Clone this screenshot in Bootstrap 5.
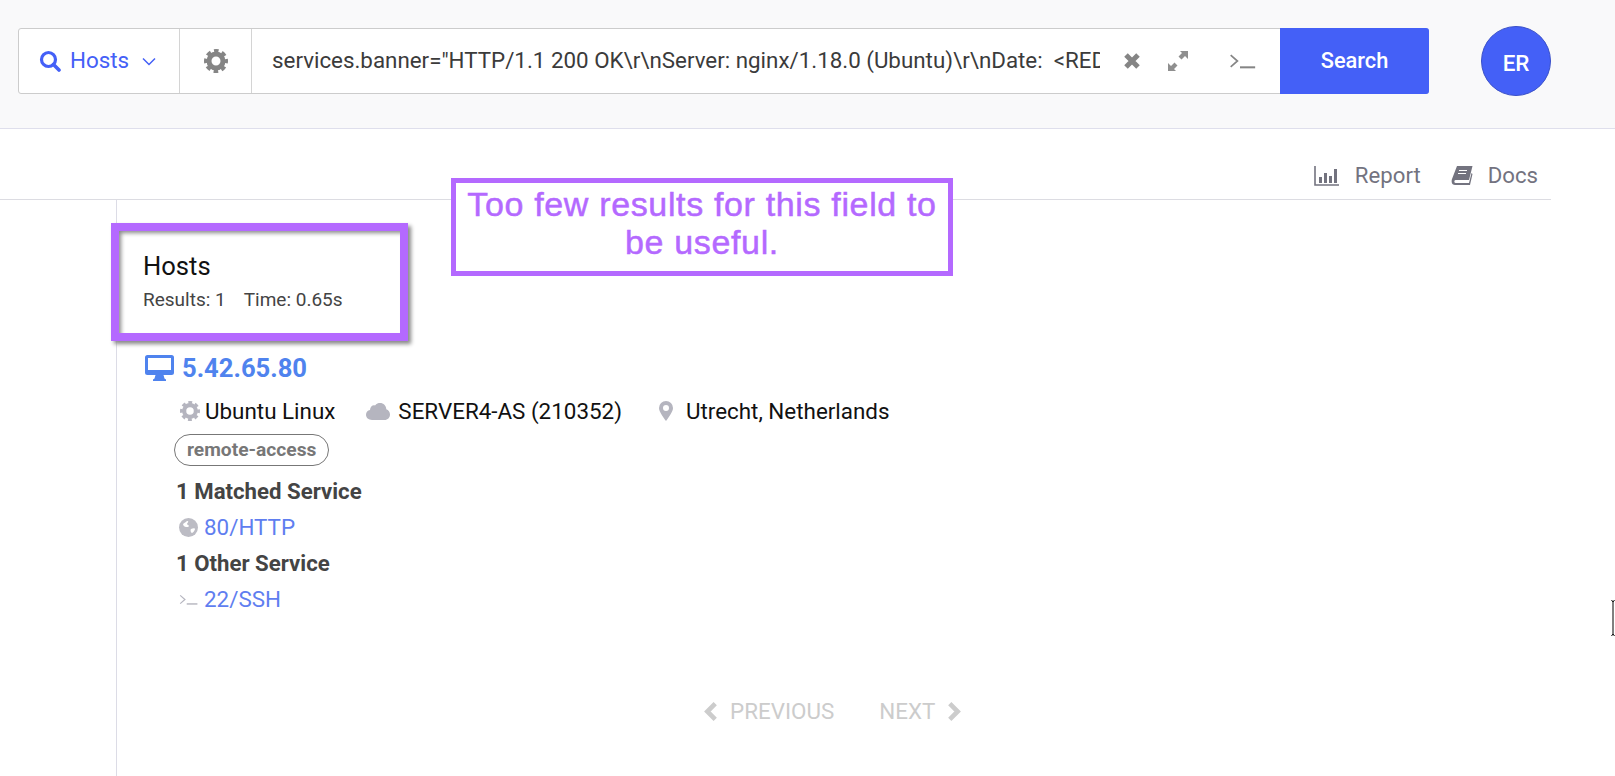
<!DOCTYPE html>
<html lang="en">
<head>
    <meta charset="UTF-8">
    <meta name="viewport" content="width=device-width, initial-scale=1.0">
    <title>Hosts search</title>
    <link href="https://cdn.jsdelivr.net/npm/bootstrap@5.3.0/dist/css/bootstrap.min.css" rel="stylesheet">
    <style>
        html, body { height: 100%; overflow: hidden; }
        body { font-family: Roboto, sans-serif; background: #fff; color: #111; position: relative; }

        .topbar { height: 129px; background: #f9f9fa; border-bottom: 1px solid #dfdfec; padding: 0 64px 6px 18px; }
        .search-box { width: 1411px; height: 66px; background: #fff; border: 1px solid #ccc; border-radius: 3px; }
        .search-type { width: 161px; color: #4460f7; font-size: 22.4px; border-right: 1px solid #d4d4d4; padding-left: 20px; }
        .type-label { margin-left: 9px; }
        .type-caret { margin-left: 13px; }
        .search-gear { width: 72px; border-right: 1px solid #d4d4d4; }
        .search-query { width: 848px; padding-left: 20px; font-size: 22.35px; color: #3b3b3b; white-space: pre; overflow: hidden; }
        .query-clip { width: 828px; overflow: hidden; }
        .search-tools { width: 180px; padding-left: 23px; }
        .tool-expand { margin-left: 26px; }
        .search-go { width: 149px; margin: -1px -1px -1px 0; background: #4460f7; color: #fff; font-size: 21.8px; font-weight: 500; border: 0; border-radius: 0 3px 3px 0; }
        .avatar { width: 70px; height: 70px; background: #4460f7; border: 1px solid #3a50c8; border-radius: 50%; color: #fff; font-size: 22.4px; font-weight: 500; padding-top: 5px; }

        .report-row { width: 1551px; height: 71px; border-bottom: 1px solid #dcdce2; color: #73737f; font-size: 22.2px; padding: 24px 13px 0 0; }
        .report-link { gap: 15px; }
        .report-link + .report-link { margin-left: 30px; }

        .results { margin-left: 116px; border-left: 1px solid #dcdce6; height: 577px; padding-left: 26px; }
        .results-head { padding-top: 50px; height: 152px; }
        .results-title { font-size: 25.6px; font-weight: 400; line-height: 32px; margin: 0; color: #111; }
        .results-meta { font-size: 19px; color: #444; line-height: 24px; margin-top: 6px; }
        .results-meta span { margin-right: 18px; }

        .host-ip { font-size: 25.6px; font-weight: 700; color: #4f83ee; line-height: 32px; gap: 8px; margin-left: 2px; }
        .host-info { margin: 13px 0 0 37px; font-size: 22.4px; line-height: 28px; }
        .host-info > div { gap: 5px; }
        .info-as { margin-left: 31px; }
        .info-as span { margin-left: 3px; }
        .info-place { margin-left: 37px; }
        .pill-label { display: inline-block; margin: 9px 0 0 31px; height: 32px; line-height: 29px; padding: 0 12px; font-size: 19.2px; font-weight: 700; color: #777; border: 1px solid #777; border-radius: 16px; }
        .svc-title { margin: 11px 0 0 33px; font-size: 22.2px; font-weight: 700; color: #444; line-height: 28px; }
        .svc-link + .svc-title { margin-top: 8px; }
        .svc-link { margin: 8px 0 0 36px; font-size: 22.4px; line-height: 28px; color: #5f7ef0; gap: 6px; }
        .pager { margin: 84px 0 0 0; padding-left: 560px; color: #ccc; font-size: 22.4px; line-height: 28px; gap: 45px; }
        .pager > div { gap: 12px; }

        .note-hosts { position: absolute; left: 111px; top: 223px; width: 297px; height: 118px; border: 8px solid #b469ff; box-shadow: 3px 3px 4px #888, inset 3px 3px 4px -1px #888; pointer-events: none; }
        .note-field { position: absolute; left: 451px; top: 178px; width: 502px; height: 98px; background: #fff; border: 5px solid #b469ff; color: #b469ff; font-family: "Liberation Sans", Arial, sans-serif; font-size: 34px; letter-spacing: .65px; -webkit-text-stroke: .5px #b469ff; line-height: 38px; text-align: center; padding-top: 2px; }
        .text-cursor { position: absolute; left: 1611px; top: 600px; }
    </style>
</head>
<body>
    <svg width="0" height="0" class="d-block position-absolute">
        <defs>
            <symbol id="gear" viewBox="0 0 24 24">
                <circle cx="12" cy="12" r="7" fill="none" stroke="currentColor" stroke-width="5"/>
                <circle cx="12" cy="12" r="9.9" fill="none" stroke="currentColor" stroke-width="4.2" stroke-dasharray="4.4 3.37" stroke-dashoffset="2.2"/>
            </symbol>
            <symbol id="prompt" viewBox="0 0 32 20">
                <path d="M2 3l8 7-8 7" fill="none" stroke="currentColor" stroke-width="2"/>
                <path d="M13 17.5h18" fill="none" stroke="currentColor" stroke-width="2.4"/>
            </symbol>
            <symbol id="chev-l" viewBox="0 0 14 20">
                <path d="M11.5 2.5L4 10l7.5 7.5" fill="none" stroke="currentColor" stroke-width="4.4"/>
            </symbol>
            <symbol id="chev-r" viewBox="0 0 14 20">
                <path d="M2.5 2.5L10 10l-7.5 7.5" fill="none" stroke="currentColor" stroke-width="4.4"/>
            </symbol>
        </defs>
    </svg>

    <header class="topbar d-flex align-items-center justify-content-between">
        <div class="search-box d-flex align-items-stretch">
            <div class="search-type d-flex align-items-center">
                <svg width="22" height="22" viewBox="0 0 22 22" class="flex-shrink-0"><circle cx="9.5" cy="9.5" r="7" fill="none" stroke="currentColor" stroke-width="3.2"/><path d="M14.5 14.5l5.5 5.5" stroke="currentColor" stroke-width="3.6" stroke-linecap="round"/></svg>
                <span class="type-label">Hosts</span>
                <svg width="14" height="9" viewBox="0 0 14 9" class="type-caret"><path d="M1 1.5l6 6 6-6" fill="none" stroke="currentColor" stroke-width="1.5"/></svg>
            </div>
            <div class="search-gear d-flex align-items-center justify-content-center">
                <svg width="24" height="24" style="color:#858585"><use href="#gear"/></svg>
            </div>
            <div class="search-query d-flex align-items-center">
                <div class="query-clip">services.banner="HTTP/1.1 200 OK\r\nServer: nginx/1.18.0 (Ubuntu)\r\nDate:  &lt;REDACTED&gt;</div>
            </div>
            <div class="search-tools d-flex align-items-center">
                <svg width="18" height="18" viewBox="0 0 18 18"><path d="M3 3l12 12M15 3L3 15" stroke="#858585" stroke-width="5"/></svg>
                <svg width="22" height="22" viewBox="0 0 22 22" class="tool-expand"><path d="M13 1h8v8l-3-3-3.500 3.500-3-3L15 3zM9 21H1v-8l3 3 3.500-3.500 3 3L7 19z" fill="#8f8f8f"/></svg>
                <svg width="27" height="18" class="ms-auto me-4" style="color:#858585"><use href="#prompt"/></svg>
            </div>
            <button class="search-go" type="button">Search</button>
        </div>
        <div class="avatar d-flex align-items-center justify-content-center">ER</div>
    </header>

    <div class="report-row d-flex align-items-center justify-content-end">
        <div class="report-link d-flex align-items-center">
            <svg width="26" height="20" viewBox="0 0 26 20"><path d="M1 0v19h24" fill="none" stroke="currentColor" stroke-width="1.6"/><path d="M5 11h3v6H5zM10 7h3v10h-3zM15 10h3v7h-3zM20 3h3v14h-3z" fill="currentColor"/></svg>
            <span>Report</span>
        </div>
        <div class="report-link d-flex align-items-center">
            <svg width="22" height="20" viewBox="0 0 22 20"><path d="M6 0h15.500l-3.500 14H4.500c-1.500 0-1.500 3 0 3H18l2.500-10 1 1L19 19H4C1 19 0 16 1 13z" fill="currentColor"/><path d="M8 4.500h8M7 7.500h8" stroke="#fff" stroke-width="1.2"/></svg>
            <span>Docs</span>
        </div>
    </div>

    <main class="results">
        <section class="results-head">
            <h1 class="results-title">Hosts</h1>
            <div class="results-meta"><span>Results: 1</span>Time: 0.65s</div>
        </section>

        <div class="host-ip d-flex align-items-center">
            <svg width="29" height="26" viewBox="0 0 29 26"><path d="M2.500 0h24A2.500 2.500 0 0 1 29 2.500v15a2.500 2.500 0 0 1-2.500 2.500h-8l1 3.500 1.500 1V26H8v-1.500l1.500-1 1-3.500h-8A2.500 2.500 0 0 1 0 17.500v-15A2.500 2.500 0 0 1 2.500 0zM3 3v12h23V3z" fill="currentColor"/></svg>
            <span>5.42.65.80</span>
        </div>

        <div class="host-info d-flex">
            <div class="d-flex align-items-center">
                <svg width="20" height="20" style="color:#b5b5bf"><use href="#gear"/></svg>
                <span>Ubuntu Linux</span>
            </div>
            <div class="d-flex align-items-center info-as">
                <svg width="24" height="17" viewBox="0 0 24 17"><path d="M6 17C2.500 17 0 14.800 0 11.800 0 9.300 1.600 7.400 4 7 4.200 3.500 6.800 1.500 9 2.400 10.500.6 12.400 0 14 0c3.500 0 6.200 2.500 6.300 6.300 2.200.6 3.700 2.700 3.700 5.200 0 3-2.300 5.500-5.500 5.500z" fill="#b5b5bf"/></svg>
                <span>SERVER4-AS (210352)</span>
            </div>
            <div class="d-flex align-items-center info-place">
                <svg width="14" height="20" viewBox="0 0 14 20" class="me-2"><path fill-rule="evenodd" d="M7 0a7 7 0 0 1 7 7c0 3.500-4 9-7 13-3-4-7-9.500-7-13a7 7 0 0 1 7-7zm0 4a3 3 0 1 0 0 6 3 3 0 0 0 0-6z" fill="#b5b5bf"/></svg>
                <span>Utrecht, Netherlands</span>
            </div>
        </div>

        <span class="pill-label">remote-access</span>

        <div class="svc-title">1 Matched Service</div>
        <div class="svc-link d-flex align-items-center">
            <svg width="19" height="19" viewBox="0 0 19 19" class="flex-shrink-0"><circle cx="9.500" cy="9.500" r="9.500" fill="#bcbcc4"/><path d="M4 6c2-1 3-3 5-3 1 1-1 2-1 3s2 1 2 2-2 1-3 1S4 8 4 6zM12 11c2-1 4-1 4 0s-2 4-3 4-2-3-1-4z" fill="#fff"/></svg>
            <span>80/HTTP</span>
        </div>

        <div class="svc-title">1 Other Service</div>
        <div class="svc-link d-flex align-items-center">
            <svg width="19" height="13" class="flex-shrink-0" style="color:#b5b5bf"><use href="#prompt"/></svg>
            <span>22/SSH</span>
        </div>

        <div class="pager d-flex">
            <div class="d-flex align-items-center">
                <svg width="15" height="21"><use href="#chev-l"/></svg>
                <span>PREVIOUS</span>
            </div>
            <div class="d-flex align-items-center">
                <span>NEXT</span>
                <svg width="15" height="21"><use href="#chev-r"/></svg>
            </div>
        </div>
    </main>

    <div class="note-hosts"></div>
    <div class="note-field">Too few results for this field to be useful.</div>

    <svg class="text-cursor" width="4" height="36" viewBox="0 0 4 36"><path d="M.5 0L2 2v32L.5 36M3.500 0L2 2M3.500 36L2 34" fill="none" stroke="#000"/></svg>

    <script src="https://cdn.jsdelivr.net/npm/bootstrap@5.3.0/dist/js/bootstrap.bundle.min.js"></script>
</body>
</html>
